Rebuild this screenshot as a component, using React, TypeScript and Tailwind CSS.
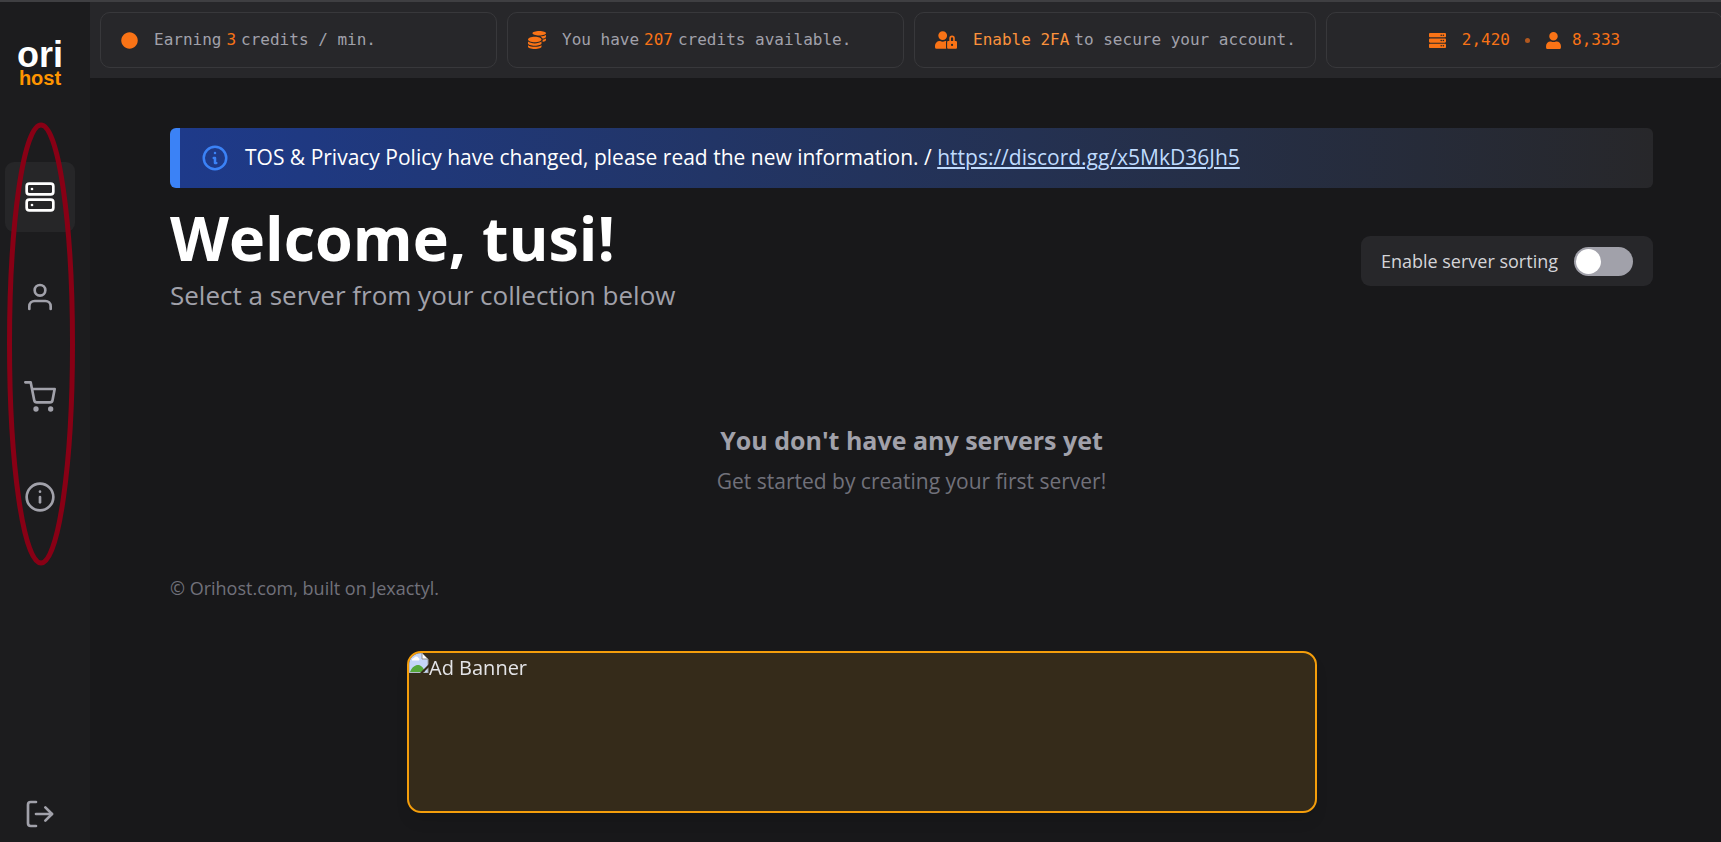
import { useState } from 'react';
import type { ReactNode } from 'react';
import { FiInfo, FiLogOut, FiServer, FiShoppingCart, FiUser } from 'react-icons/fi';
import { FaCircle, FaCoins, FaServer, FaUser, FaUserLock } from 'react-icons/fa';

const links = [
  { label: 'Servers', icon: FiServer, active: true },
  { label: 'Account', icon: FiUser, active: false },
  { label: 'Store', icon: FiShoppingCart, active: false },
  { label: 'Information', icon: FiInfo, active: false },
];

function Logo() {
  return (
    <a
      href="#home"
      className="flex flex-col items-center font-['Liberation_Sans',sans-serif] font-bold"
    >
      <span className="text-[36px] leading-[30px] text-white">ori</span>
      <span className="text-[20px] leading-[16px] text-[#ff9500]">host</span>
    </a>
  );
}

function Sidebar() {
  return (
    <aside className="relative flex w-[90px] shrink-0 flex-col items-center bg-[#1c1c1e] pt-[38px] pr-[10px] pb-3">
      <Logo />
      <nav className="mt-[76px] flex flex-col gap-[30px]">
        {links.map(({ label, icon: Icon, active }) => (
          <a
            key={label}
            href={`#${label.toLowerCase()}`}
            aria-label={label}
            className={
              active
                ? 'flex size-[70px] items-center justify-center rounded-[9px] bg-[#262628] text-white'
                : 'flex size-[70px] items-center justify-center rounded-[9px] text-[#a1a1aa]'
            }
          >
            <Icon size={32} />
          </a>
        ))}
      </nav>
      <button type="button" aria-label="Log out" className="mt-auto text-[#a1a1aa]">
        <FiLogOut size={32} />
      </button>
      <svg
        className="pointer-events-none absolute top-[119px] left-1 h-[446px] w-[74px]"
        viewBox="0 0 74 446"
        fill="none"
        aria-hidden="true"
      >
        <ellipse cx="37" cy="223" rx="31.5" ry="219" stroke="#880015" strokeWidth="5" />
      </svg>
    </aside>
  );
}

function StatCard({ children, centered = false }: { children: ReactNode; centered?: boolean }) {
  return (
    <div
      className={
        centered
          ? 'flex items-center justify-center gap-[15px] rounded-[10px] border border-[#38383b] whitespace-nowrap text-[#f97316]'
          : 'flex items-center gap-4 rounded-[10px] border border-[#38383b] pl-5 whitespace-nowrap text-[#a1a1aa]'
      }
    >
      {children}
    </div>
  );
}

function TopBar() {
  return (
    <header className="h-[76px] overflow-hidden bg-[#27272a] py-[10px] pl-[10px] font-['DejaVu_Sans_Mono',monospace] text-[16px]">
      <div className="-mr-[2px] grid h-full grid-cols-[397fr_397fr_402fr_397fr] gap-[10px]">
        <StatCard>
          <FaCircle size={17} className="text-[#f97316]" />
          <p className="flex gap-[5px]">
            Earning <span className="text-[#f97316]">3</span> credits / min.
          </p>
        </StatCard>
        <StatCard>
          <FaCoins size={18} className="text-[#f97316]" />
          <p className="flex gap-[5px]">
            You have <span className="text-[#f97316]">207</span> credits available.
          </p>
        </StatCard>
        <StatCard>
          <FaUserLock size={22} className="text-[#f97316]" />
          <p className="flex gap-[5px]">
            <a href="#account" className="text-[#fb923c]">
              Enable 2FA
            </a>{' '}
            to secure your account.
          </p>
        </StatCard>
        <StatCard centered>
          <span className="flex items-center gap-4">
            <FaServer size={17} />
            2,420
          </span>
          <span className="size-[5px] rounded-full bg-[#b2581f]" />
          <span className="flex items-center gap-[10px]">
            <FaUser size={17} />
            8,333
          </span>
        </StatCard>
      </div>
    </header>
  );
}

function Announcement() {
  return (
    <div className="flex h-[60px] items-center rounded-[6px] border-l-[10px] border-[#3b82f6] bg-linear-to-r from-[#1e3a8a] to-[#27272a] pl-5 text-[21px] text-white">
      <svg
        className="mr-[15px] size-[30px] shrink-0 text-[#3b82f6]"
        viewBox="0 0 24 24"
        fill="none"
        stroke="currentColor"
        strokeWidth="2"
        strokeLinecap="round"
        strokeLinejoin="round"
        aria-hidden="true"
      >
        <path d="M13 16h-1v-4h-1m1-4h.01M21 12a9 9 0 11-18 0 9 9 0 0118 0z" />
      </svg>
      <p>
        TOS &amp; Privacy Policy have changed, please read the new information. /{' '}
        <a href="https://discord.gg/x5MkD36Jh5" className="text-[#bfdbfe] underline">
          https://discord.gg/x5MkD36Jh5
        </a>
      </p>
    </div>
  );
}

function SortingToggle() {
  const [sorting, setSorting] = useState(false);
  return (
    <label className="flex h-[50px] items-center gap-4 rounded-[9px] bg-[#27272a] px-5 text-[18px] text-[#d4d4d8]">
      Enable server sorting
      <input
        type="checkbox"
        role="switch"
        checked={sorting}
        onChange={(event) => setSorting(event.target.checked)}
        className="h-[29px] w-[59px] appearance-none rounded-full bg-[#a1a1aa] p-[2px] before:block before:size-[25px] before:rounded-full before:bg-white checked:bg-[#f97316] checked:before:ml-auto"
      />
    </label>
  );
}

function BrokenImage() {
  return (
    <svg className="size-5 shrink-0" viewBox="0 0 20 20" aria-hidden="true">
      <path d="M0 0h13l6 6v14H0z" fill="#c5d5f7" />
      <path d="M0 0h13l6 6v14H0z" fill="none" stroke="#a3a3a3" />
      <path d="M13 0v6h6z" fill="#fff" stroke="#8f8f8f" />
      <path d="M3 7.500a2 2 0 0 1 2-2.500 2.500 2.500 0 0 1 4.500 0 1.500 1.500 0 0 1 .5 2.500z" fill="#fff" />
      <path d="M1 19c2-5 5-7 8-7s5 2 7 7z" fill="#56a83a" />
      <path d="M11 20 20 11v3l-6 6z" fill="#352b1a" />
    </svg>
  );
}

function AdBanner() {
  return (
    <div className="pointer-events-none fixed inset-x-0 bottom-[29px] flex justify-center pl-[3px]">
      <a
        href="#ad"
        className="pointer-events-auto flex h-[162px] w-[910px] items-start overflow-hidden rounded-[14px] border-2 border-[#f59e0b] bg-[#352b1a] text-[20px] leading-[30px] text-[#e4e4e7] shadow-lg"
      >
        <BrokenImage />
        Ad Banner
      </a>
    </div>
  );
}

export default function App() {
  return (
    <div className="flex min-h-screen overflow-hidden border-t-2 border-[#3f3f42] bg-[#18181a] font-['Open_Sans','Noto_Sans',sans-serif]">
      <Sidebar />
      <div className="min-w-0 flex-1">
        <TopBar />
        <main className="pt-[50px] pr-[68px] pl-20">
          <Announcement />
          <div className="mt-5 flex items-start justify-between">
            <div>
              <h1 className="text-[61px] leading-[60px] font-bold text-white">Welcome, tusi!</h1>
              <p className="text-[26px] leading-[54px] text-[#a1a1aa]">
                Select a server from your collection below
              </p>
            </div>
            <div className="mt-7">
              <SortingToggle />
            </div>
          </div>
          <section className="mt-[98px] text-center">
            <h2 className="text-[25px] leading-[40px] font-bold text-[#a1a1aa]">
              You don't have any servers yet
            </h2>
            <p className="text-[21px] leading-[42px] text-[#71717a]">
              Get started by creating your first server!
            </p>
          </section>
          <footer className="mt-[72px] text-[18px] leading-[28px] text-[#71717a]">
            © Orihost.com, built on Jexactyl.
          </footer>
        </main>
      </div>
      <AdBanner />
    </div>
  );
}
